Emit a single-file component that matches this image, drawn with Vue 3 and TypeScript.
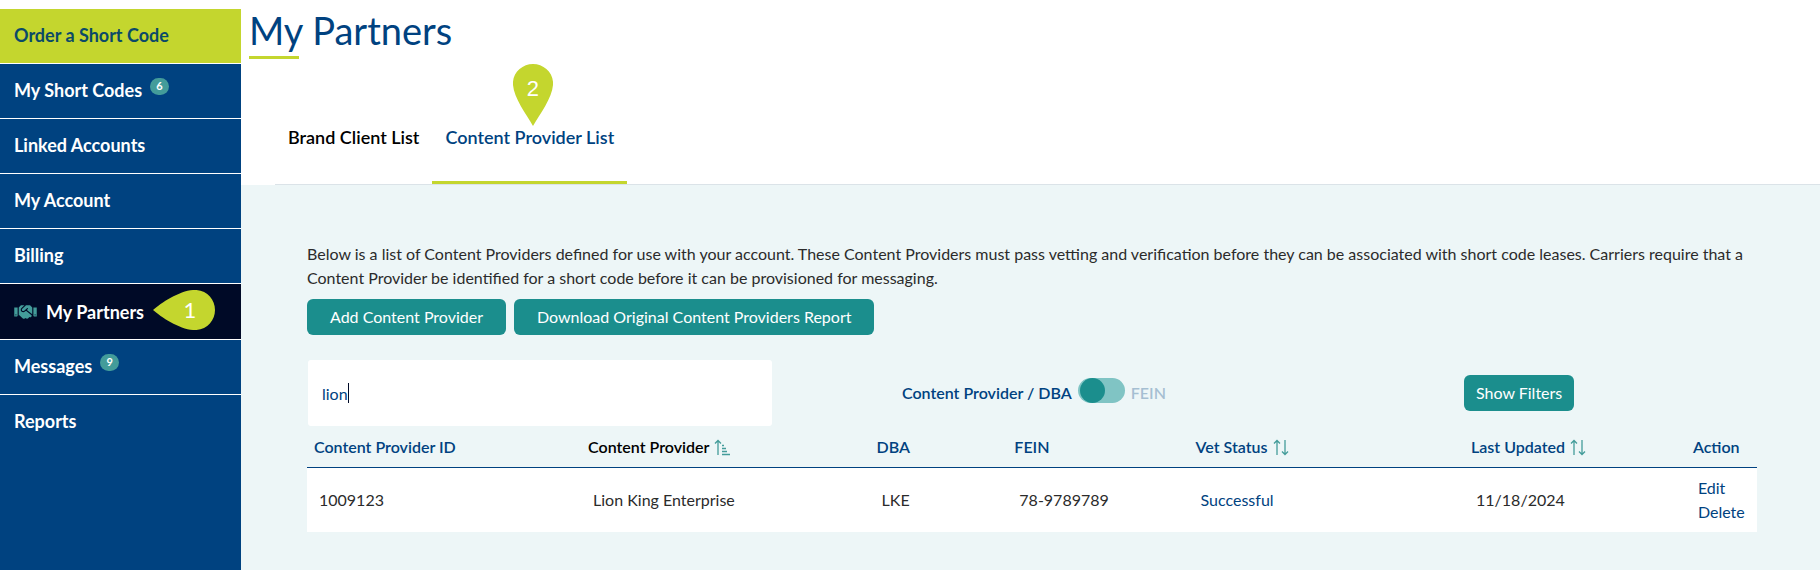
<script setup lang="ts">
import { ref } from 'vue'

interface NavItem {
  label: string
  badge?: number
  active?: boolean
  highlight?: boolean
}

interface Provider {
  id: string
  name: string
  dba: string
  fein: string
  status: string
  updated: string
}

const navItems: NavItem[] = [
  { label: 'Order a Short Code', highlight: true },
  { label: 'My Short Codes', badge: 6 },
  { label: 'Linked Accounts' },
  { label: 'My Account' },
  { label: 'Billing' },
  { label: 'My Partners', active: true },
  { label: 'Messages', badge: 9 },
  { label: 'Reports' },
]

const providers: Provider[] = [
  {
    id: '1009123',
    name: 'Lion King Enterprise',
    dba: 'LKE',
    fein: '78-9789789',
    status: 'Successful',
    updated: '11/18/2024',
  },
]

const search = ref('lion')
const byFein = ref(false)
</script>

<template>
  <div class="page">
    <nav class="sidebar" aria-label="Account">
      <a
        v-for="item in navItems"
        :key="item.label"
        href="#"
        class="nav-item"
        :class="{ active: item.active, highlight: item.highlight }"
      >
        <svg v-if="item.active" class="handshake" viewBox="0 0 640 512" aria-hidden="true">
          <path
            d="M434.7 64h-85.9c-8 0-15.7 3-21.6 8.4l-98.3 90c-.1.1-.2.3-.3.4-16.6 15.6-16.3 40.5-2.1 56 12.7 13.9 39.4 17.6 56.1 2.7.1-.1.3-.1.4-.2l79.9-73.2c6.5-5.9 16.7-5.5 22.6 1 6 6.5 5.5 16.6-1 22.6l-26.1 23.9L504 313.8c2.9 2.4 5.5 5 7.9 7.7V128l-54.6-54.6c-5.9-6-14.1-9.4-22.6-9.4zM544 128.2v223.9c0 17.7 14.3 32 32 32h64V128.2h-96zm48 223.9c-8.8 0-16-7.2-16-16s7.2-16 16-16 16 7.2 16 16-7.2 16-16 16zM0 384h64c17.7 0 32-14.3 32-32V128.2H0V384zm48-63.9c8.8 0 16 7.2 16 16s-7.2 16-16 16-16-7.2-16-16c0-8.9 7.2-16 16-16zm435.9 18.6L334.6 217.5l-30 27.5c-29.7 27.1-75.2 24.5-101.7-4.4-26.9-29.4-24.8-74.9 4.4-101.7L289.1 64h-83.8c-8.5 0-16.6 3.4-22.6 9.4L128 128v223.9h18.3l90.5 81.9c27.4 22.3 67.7 18.1 90-9.3l.2-.2 17.9 15.5c15.9 13 39.4 10.5 52.3-5.4l31.4-38.6 5.4 4.4c13.7 11.1 33.9 9.1 45-4.7l9.5-11.7c11.2-13.8 9.1-33.9-4.6-45.1z"
          />
        </svg>
        <span>{{ item.label }}</span>
        <span v-if="item.badge" class="badge">{{ item.badge }}</span>
        <span v-if="item.active" class="marker marker-left">
          <svg viewBox="0 0 62 40" aria-hidden="true">
            <path d="M0 20C8 13 26 1 40 0C53-1 62 9 62 20S53 41 40 40C26 39 8 27 0 20Z" />
          </svg>
          <span>1</span>
        </span>
      </a>
    </nav>

    <main class="main">
      <header class="top">
        <h1>My Partners</h1>
        <nav class="tabs" aria-label="Partner lists">
          <a href="#" class="tab">Brand Client List</a>
          <a href="#" class="tab selected">
            Content Provider List
            <span class="marker marker-down">
              <svg viewBox="0 0 40 62" aria-hidden="true">
                <path d="M20 62C13 50 1 34 0 21C-1 9 9 0 20 0S41 9 40 21C39 34 27 50 20 62Z" />
              </svg>
              <span>2</span>
            </span>
          </a>
        </nav>
      </header>

      <section class="content">
        <p class="intro">
          Below is a list of Content Providers defined for use with your account. These Content
          Providers must pass vetting and verification before they can be associated with short code
          leases. Carriers require that a Content Provider be identified for a short code before it
          can be provisioned for messaging.
        </p>

        <div class="actions">
          <button type="button" class="btn">Add Content Provider</button>
          <button type="button" class="btn">Download Original Content Providers Report</button>
        </div>

        <div class="filters">
          <div class="search">
            <input v-model="search" type="text" aria-label="Search content providers" />
            <span v-if="search === 'lion'" class="caret" aria-hidden="true"></span>
          </div>
          <div class="switch-row">
            <label for="search-mode" :class="{ muted: byFein }">Content Provider / DBA</label>
            <input id="search-mode" v-model="byFein" type="checkbox" class="switch" />
            <label for="search-mode" :class="{ muted: !byFein }">FEIN</label>
          </div>
          <div>
            <button type="button" class="btn compact">Show Filters</button>
          </div>
        </div>

        <table>
          <colgroup>
            <col class="c-id" />
            <col class="c-name" />
            <col class="c-dba" />
            <col class="c-fein" />
            <col class="c-status" />
            <col class="c-updated" />
            <col class="c-action" />
          </colgroup>
          <thead>
            <tr>
              <th scope="col">Content Provider ID</th>
              <th scope="col" class="sorted">
                <button type="button" class="sort">
                  Content Provider
                  <svg class="sort-icon" viewBox="0 0 16 17" aria-hidden="true">
                    <path d="M4 16V1M1 4.500L4 1.500L7 4.500" />
                    <path d="M8 6.500h2M8 9.500h4M8 12.500h5M8 15.500h8" />
                  </svg>
                </button>
              </th>
              <th scope="col">DBA</th>
              <th scope="col">FEIN</th>
              <th scope="col">
                <button type="button" class="sort">
                  Vet Status
                  <svg class="sort-icon" viewBox="0 0 16 17" aria-hidden="true">
                    <path d="M4 16V1M1 4.500L4 1.500L7 4.500M12 1V16M9 12.500L12 15.500L15 12.500" />
                  </svg>
                </button>
              </th>
              <th scope="col">
                <button type="button" class="sort">
                  Last Updated
                  <svg class="sort-icon" viewBox="0 0 16 17" aria-hidden="true">
                    <path d="M4 16V1M1 4.500L4 1.500L7 4.500M12 1V16M9 12.500L12 15.500L15 12.500" />
                  </svg>
                </button>
              </th>
              <th scope="col">Action</th>
            </tr>
          </thead>
          <tbody>
            <tr v-for="p in providers" :key="p.id">
              <td>{{ p.id }}</td>
              <td>{{ p.name }}</td>
              <td>{{ p.dba }}</td>
              <td>{{ p.fein }}</td>
              <td><a href="#">{{ p.status }}</a></td>
              <td>{{ p.updated }}</td>
              <td class="row-actions">
                <a href="#">Edit</a>
                <a href="#">Delete</a>
              </td>
            </tr>
          </tbody>
        </table>
      </section>
    </main>
  </div>
</template>

<style>
body {
  margin: 0;
  background: #fff;
}
</style>

<style scoped>
.page {
  --navy: #004280;
  --teal: #1b8e8d;
  --lime: #c4d62e;
  --pale: #edf6f7;
  box-sizing: border-box;
  min-height: 100vh;
  padding-top: 8px;
  display: flex;
  font-family: Lato, 'Liberation Sans', sans-serif;
  font-size: 16px;
  line-height: 24px;
  color: #2b2b2b;
}

a {
  color: var(--navy);
  text-decoration: none;
}

.sidebar {
  flex: 0 0 241px;
  background: var(--navy);
}

.nav-item {
  position: relative;
  box-sizing: border-box;
  height: 55px;
  padding: 0 14px 2px;
  border-top: 1px solid #fff;
  display: flex;
  align-items: center;
  color: #fff;
  font-size: 18px;
  font-weight: 700;
}

.nav-item.highlight {
  background: var(--lime);
  color: #0b4a68;
}

.nav-item.active {
  height: 56px;
  padding-bottom: 0;
  background: #000a27;
}

.handshake {
  width: 23px;
  height: 18px;
  margin-right: 9px;
  fill: #439c9a;
}

.badge {
  margin: 0 0 8px 8px;
  min-width: 19px;
  height: 17px;
  border-radius: 9px;
  background: #439c9a;
  font-size: 11px;
  line-height: 16px;
  text-align: center;
}

.marker {
  position: absolute;
  color: #fff;
  font-size: 22px;
  font-weight: 400;
}

.marker svg {
  display: block;
  width: 100%;
  height: 100%;
  fill: var(--lime);
}

.marker span {
  position: absolute;
  inset: 0;
  display: grid;
  place-items: center;
}

.marker-left {
  top: 6px;
  left: 153px;
  width: 62px;
  height: 40px;
}

.marker-left span {
  padding-left: 12px;
}

.marker-down {
  bottom: 55px;
  left: calc(50% - 17px);
  width: 40px;
  height: 62px;
  font-family: 'Liberation Sans', sans-serif;
}

.marker-down span {
  padding-bottom: 12px;
}

.main {
  flex: 1;
  min-width: 0;
  display: flex;
  flex-direction: column;
}

.top {
  padding-left: 8px;
}

h1 {
  margin: 0;
  color: var(--navy);
  font-size: 38px;
  font-weight: 400;
  line-height: 44px;
}

h1::after {
  content: '';
  display: block;
  width: 50px;
  height: 3px;
  margin-top: 4px;
  background: var(--lime);
}

.tabs {
  margin: 58px 0 0 26px;
  display: flex;
  border-bottom: 1px solid #dbe3e8;
}

.tab {
  position: relative;
  padding: 8px 13px 32px;
  border-bottom: 3px solid transparent;
  color: #000;
  font-size: 18px;
  font-weight: 600;
}

.tab.selected {
  color: var(--navy);
  border-color: var(--lime);
}

.content {
  flex: 1;
  padding: 57px 63px 38px 66px;
  background: var(--pale);
}

.intro {
  margin: 0;
}

.actions {
  margin-top: 9px;
  display: flex;
  gap: 8px;
}

.btn {
  height: 36px;
  padding: 0 23px;
  border: 0;
  border-radius: 6px;
  background: var(--teal);
  color: #fff;
  font: inherit;
}

.btn.compact {
  padding: 0 12px;
}

.filters {
  margin-top: 25px;
  display: grid;
  grid-template-columns: 595fr 562fr 293fr;
  align-items: center;
}

.search {
  position: relative;
  width: 78%;
  margin-left: 1px;
}

.search input {
  box-sizing: border-box;
  display: block;
  width: 100%;
  height: 66px;
  padding: 0 14px;
  border: 0;
  border-radius: 3px;
  background: #fff;
  color: var(--navy);
  font: inherit;
  outline: none;
}

.caret {
  position: absolute;
  top: 23px;
  left: 40px;
  width: 1px;
  height: 20px;
  background: #000a27;
}

.switch-row {
  display: flex;
  align-items: center;
  gap: 6px;
  color: var(--navy);
  font-weight: 600;
}

.muted {
  opacity: 0.3;
}

.switch {
  appearance: none;
  width: 47px;
  height: 25px;
  margin: 0 0 6px;
  padding: 0 2px;
  border-radius: 13px;
  background: #80c4c4;
  display: flex;
}

.switch::before {
  content: '';
  width: 25px;
  height: 25px;
  border-radius: 50%;
  background: var(--teal);
}

.switch:checked {
  justify-content: flex-end;
}

table {
  width: 100%;
  table-layout: fixed;
  border-collapse: separate;
  border-spacing: 0;
}

.c-id { width: 18.9%; }
.c-name { width: 19.9%; }
.c-dba { width: 9.5%; }
.c-fein { width: 12.5%; }
.c-status { width: 19%; }
.c-updated { width: 15.3%; }
.c-action { width: 4.9%; }

th {
  padding: 9px 0 8px 7px;
  border-bottom: 1px solid var(--navy);
  color: var(--navy);
  font-weight: 600;
  text-align: left;
  white-space: nowrap;
}

.sort {
  padding: 0;
  border: 0;
  background: none;
  color: inherit;
  font: inherit;
  display: flex;
  align-items: center;
  gap: 5px;
}

.sorted {
  color: #000;
}

.sort-icon {
  width: 16px;
  height: 17px;
  fill: none;
  stroke: #439c9a;
  stroke-width: 1.3;
}

td {
  padding: 8px 0 8px 12px;
  background: #fff;
}

.row-actions a {
  display: block;
}
</style>
